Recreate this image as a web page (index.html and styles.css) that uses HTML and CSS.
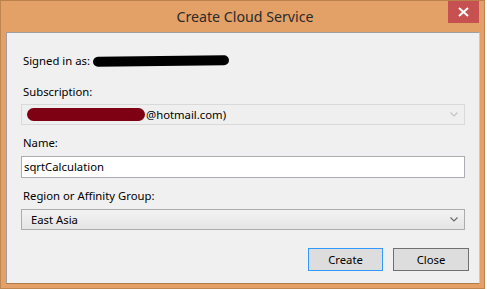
FILE: index.html
```html
<!DOCTYPE html>
<html lang="en">
<head>
    <meta charset="UTF-8">
    <title>Create Cloud Service</title>
    <link rel="stylesheet" href="styles.css">
</head>
<body>
    <div class="window">
        <div class="titlebar">
            <span></span>
            <span class="title">Create Cloud Service</span>
            <span class="close-btn">
                <svg width="11" height="10" viewBox="0 0 11 10"><path d="M1 1 L10 9 M10 1 L1 9" stroke="#fff" stroke-width="2"/></svg>
            </span>
        </div>

        <div class="client">
            <div class="label signed">Signed in as: <span class="scribble black"></span></div>

            <div class="label gap-lg">Subscription:</div>
            <div class="combo disabled">
                <span class="combo-text"><span class="scribble red"></span>@hotmail.com)</span>
                <svg class="chevron" width="8" height="5" viewBox="0 0 8 5"><polyline points="0.5,0.5 4,4 7.5,0.5" fill="none" stroke="#c4c4c4" stroke-width="1.2"/></svg>
            </div>

            <div class="label gap-md">Name:</div>
            <div class="textbox">sqrtCalculation</div>

            <div class="label gap-md">Region or Affinity Group:</div>
            <div class="combo">
                <span class="combo-text region">East Asia</span>
                <svg class="chevron" width="8" height="5" viewBox="0 0 8 5"><polyline points="0.5,0.5 4,4 7.5,0.5" fill="none" stroke="#6a6a6a" stroke-width="1.2"/></svg>
            </div>

            <div class="buttons">
                <button class="btn btn-default">Create</button>
                <button class="btn">Close</button>
            </div>
        </div>
    </div>
</body>
</html>
```

FILE: styles.css
```css
* {
    margin: 0;
    padding: 0;
    box-sizing: border-box;
}

body {
    background: #fff;
    font-family: 'Noto Sans', 'Open Sans', sans-serif;
    font-size: 11.3px;
    color: #000;
}

.window {
    width: 485px;
    height: 289px;
    background: #e3a067;
    border: 1px solid #c08650;
    border-top-color: #b98049;
    padding: 0 4px 4px 5px;
    display: flex;
    flex-direction: column;
}

.titlebar {
    height: 31px;
    display: grid;
    grid-template-columns: 1fr auto 1fr;
    align-items: start;
}

.title {
    font-size: 14.2px;
    color: #2b2b2b;
    line-height: 31px;
    padding-left: 4px;
}

.close-btn {
    justify-self: end;
    width: 31px;
    height: 22px;
    margin-right: 1px;
    background: #c75050;
    display: flex;
    align-items: center;
    justify-content: center;
}

.client {
    flex: 1;
    background: #f0f0f0;
    border: 1px solid #a8a8a8;
    border-color: #9e9e9e #c9c9c9 #b07a48 #9e9e9e;
    padding: 20px 10px 0 14px;
    display: flex;
    flex-direction: column;
}

.label {
    line-height: 16px;
    padding-left: 2px;
    color: #000;
}

.signed {
    display: flex;
    align-items: center;
}

.gap-lg {
    margin-top: 15px;
    margin-bottom: 4px;
}

.gap-md {
    margin-top: 10px;
    margin-bottom: 5px;
}

.scribble {
    display: inline-block;
    border-radius: 7px;
}

.scribble.black {
    width: 136px;
    height: 10px;
    margin-left: 3px;
    background: #000;
    transform: rotate(-0.6deg);
}

.scribble.red {
    width: 118px;
    height: 13px;
    background: #7d0013;
    vertical-align: middle;
    margin-right: 1px;
}

.combo {
    width: 444px;
    height: 21px;
    border: 1px solid #acacac;
    background: linear-gradient(#f2f2f2, #e5e5e5);
    display: flex;
    align-items: center;
    justify-content: space-between;
    padding: 0 6px 0 5px;
}

.combo.disabled {
    background: #efefef;
    border-color: #d9d9d9;
}

.combo-text {
    display: flex;
    align-items: center;
    line-height: 16px;
}

.combo-text.region {
    padding-left: 4px;
}

.textbox {
    width: 444px;
    height: 22px;
    background: #fff;
    border: 1px solid #abadb3;
    padding: 0 2px;
    line-height: 20px;
}

.buttons {
    display: flex;
    justify-content: flex-end;
    gap: 10px;
    margin-top: 18px;
}

.btn {
    width: 76px;
    height: 23px;
    font-family: inherit;
    font-size: 11.3px;
    color: #000;
    background: #dddddd;
    border: 1px solid #707070;
}

.btn-default {
    width: 75px;
    border-color: #3399ff;
}
```
